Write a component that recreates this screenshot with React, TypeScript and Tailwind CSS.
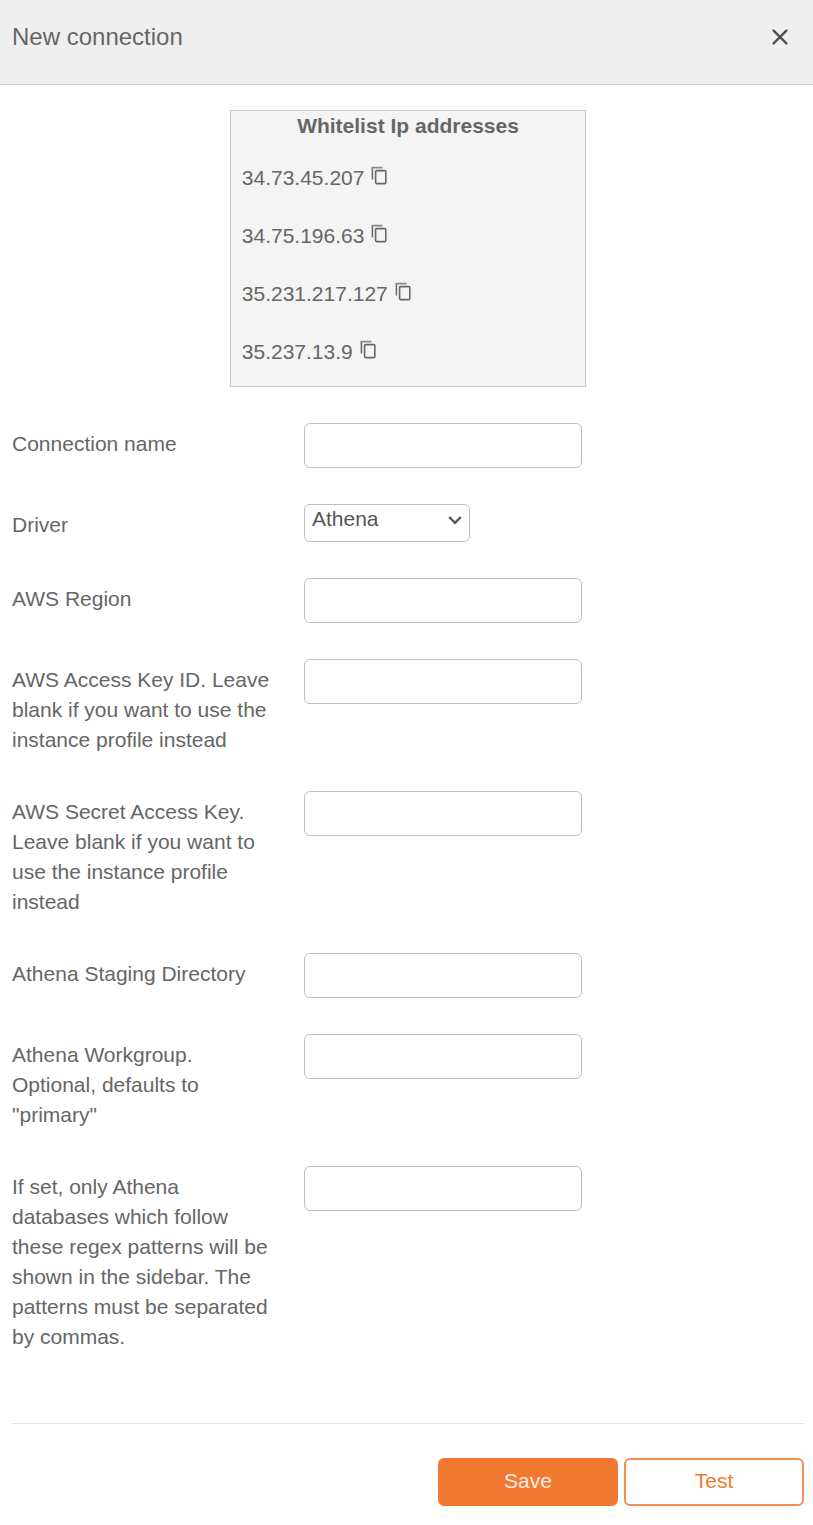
import React from "react";

const ipAddresses = ["34.73.45.207", "34.75.196.63", "35.231.217.127", "35.237.13.9"];

const athenaFields = [
  { id: "region", label: "AWS Region" },
  { id: "access-key", label: "AWS Access Key ID. Leave blank if you want to use the instance profile instead" },
  { id: "secret-key", label: "AWS Secret Access Key. Leave blank if you want to use the instance profile instead" },
  { id: "staging-directory", label: "Athena Staging Directory" },
  { id: "workgroup", label: 'Athena Workgroup. Optional, defaults to "primary"' },
  {
    id: "regex",
    label:
      "If set, only Athena databases which follow these regex patterns will be shown in the sidebar. The patterns must be separated by commas.",
  },
];

function CopyIcon() {
  return (
    <svg width="18" height="20" viewBox="0 0 18 20" fill="none" stroke="currentColor" aria-hidden="true">
      <path d="M2.4 13.5V2.5" strokeWidth="1.5" />
      <path d="M1.7 2.4Q1.7 1.7 2.8 1.7H12.5" strokeWidth="1.7" strokeOpacity="0.75" />
      <rect x="5.6" y="4.6" width="10.2" height="13" rx="1" strokeWidth="1.6" />
    </svg>
  );
}

function FieldRow({ id, label, children }: { id: string; label: string; children: React.ReactNode }) {
  return (
    <div className="flex items-start">
      <label htmlFor={id} className="mr-7 w-1/3 shrink-0 pt-1.5">
        {label}
      </label>
      {children}
    </div>
  );
}

function TextField({ id, label }: { id: string; label: string }) {
  return (
    <FieldRow id={id} label={label}>
      <input
        id={id}
        type="text"
        className="h-[45px] w-[278px] rounded-md border border-[#b9c0c8] bg-white px-2 outline-none focus:border-[#f27931]"
      />
    </FieldRow>
  );
}

export default function App() {
  return (
    <div className="bg-white font-['Liberation_Sans',Arial,sans-serif] text-[21px] leading-[30px] text-[#666]">
      <header className="flex items-center justify-between border-b border-[#cfd5da] bg-[#efefef] pt-[21px] pr-5 pb-[31px] pl-3">
        <h1 className="text-[24px] leading-8">New connection</h1>
        <button type="button" aria-label="Close" className="flex size-[26px] items-center justify-center text-[#555]">
          <svg width="18" height="18" viewBox="0 0 18 18" fill="none" stroke="currentColor" strokeWidth="2.5" strokeLinecap="round">
            <path d="M2.6 2.6L15.4 15.4M15.4 2.6L2.6 15.4" />
          </svg>
        </button>
      </header>

      <main className="pt-[25px] pr-[9px] pb-5 pl-3">
        <section className="mx-auto w-[45%] border border-[#c8c8c8] bg-[#f4f4f4] px-[11px] pb-[19px]">
          <h2 className="text-center font-bold">Whitelist Ip addresses</h2>
          <ul className="mt-[22px] flex flex-col gap-7">
            {ipAddresses.map((ip) => (
              <li key={ip} className="flex items-center gap-1.5">
                {ip}
                <button type="button" aria-label={`Copy ${ip}`} className="pb-1">
                  <CopyIcon />
                </button>
              </li>
            ))}
          </ul>
        </section>

        <form className="mt-9" onSubmit={(e) => e.preventDefault()}>
          <div className="flex flex-col gap-9">
            <TextField id="connection-name" label="Connection name" />
            <FieldRow id="driver" label="Driver">
              <div className="relative w-[21%]">
                <select
                  id="driver"
                  defaultValue="Athena"
                  className="block h-[38px] w-full appearance-none rounded-md border border-[#b9c0c8] bg-white pr-8 pb-2 pl-[7px] leading-7 text-[#555] outline-none"
                >
                  <option>Athena</option>
                </select>
                <svg
                  className="pointer-events-none absolute top-2.5 right-2 text-[#555]"
                  width="14"
                  height="12"
                  viewBox="0 0 14 12"
                  fill="none"
                  stroke="currentColor"
                  strokeWidth="2.4"
                  aria-hidden="true"
                >
                  <path d="M1.2 3L7 8.8L12.8 3" />
                </svg>
              </div>
            </FieldRow>
            {athenaFields.map((field) => (
              <TextField key={field.id} {...field} />
            ))}
          </div>

          <footer className="mt-[71px] flex justify-end gap-1.5 border-t border-[#e2e2e2] pt-[34px]">
            <button type="submit" className="h-12 w-[180px] rounded-md border-2 border-[#f27931] bg-[#f27931] pb-0.5 text-[#fdebe0]">
              Save
            </button>
            <button type="button" className="h-12 w-[180px] rounded-md border-2 border-[#f48d50] bg-white pb-0.5 text-[#f27931]">
              Test
            </button>
          </footer>
        </form>
      </main>
    </div>
  );
}
